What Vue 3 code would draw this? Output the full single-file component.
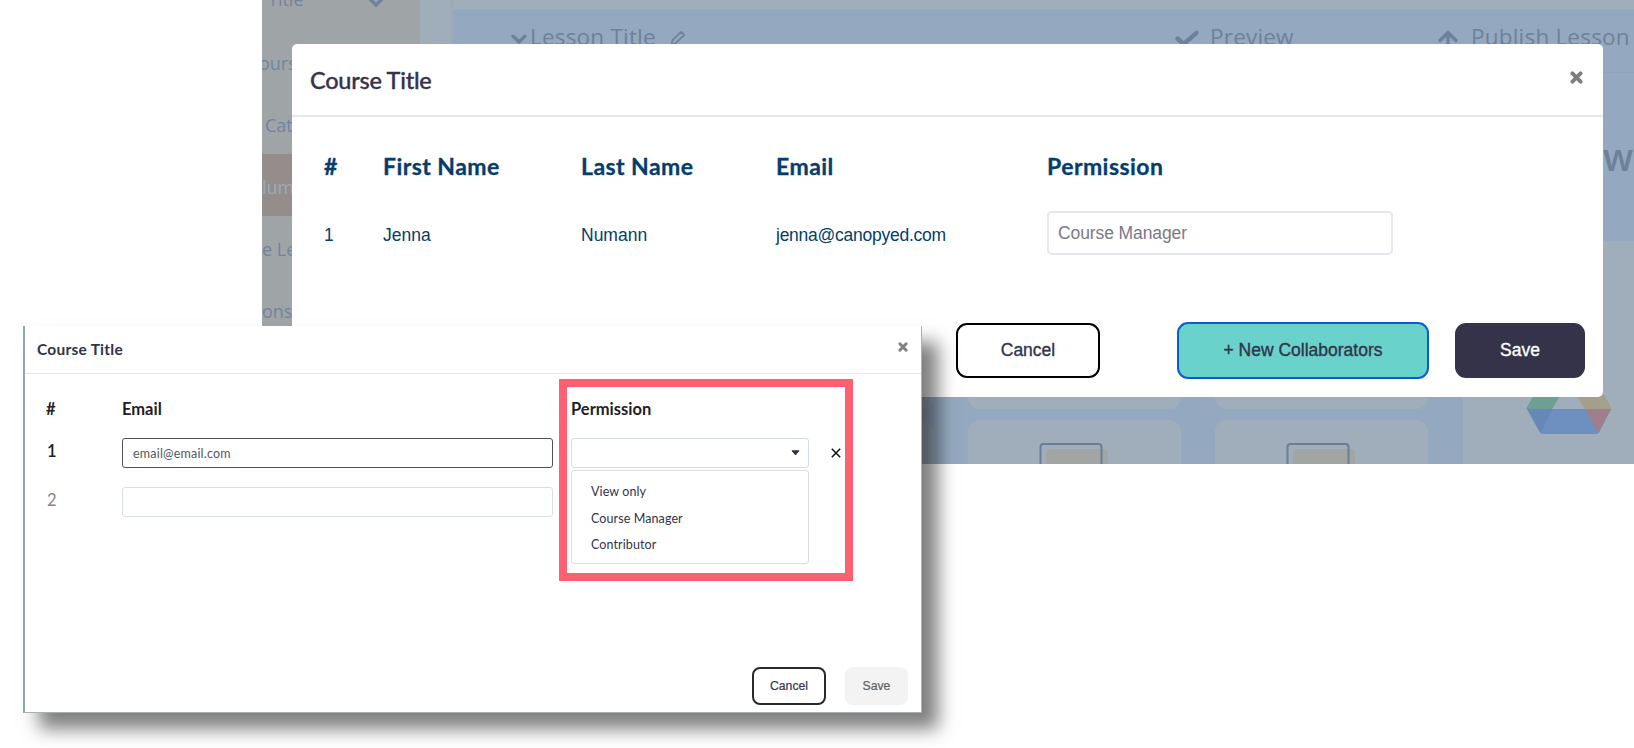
<script setup>
import { ref } from 'vue'

const menuItems = [
    { label: 'Title', caret: true },
    { label: 'ours' },
    { label: 'Cat' },
    { label: 'lum', active: true },
    { label: 'e Le' },
    { label: 'ons' }
]

const members = ref([
    { first: 'Jenna', last: 'Numann', email: 'jenna@canopyed.com', permission: 'Course Manager' }
])

const invites = ref([{ email: 'email@email.com' }, { email: '' }])

const permissions = ['View only', 'Course Manager', 'Contributor']
</script>

<template>
    <div class="stage">
        <div class="app">
            <aside class="sidebar">
                <div v-for="(item, i) in menuItems" :key="item.label" class="side-item"
                    :class="['side-' + i, { active: item.active }]">
                    <span>{{ item.label }}</span>
                    <svg v-if="item.caret" class="side-caret" width="16" height="10" viewBox="0 0 16 10">
                        <path d="M2 2l6 6 6-6" fill="none" stroke="#6f83a0" stroke-width="3.5" />
                    </svg>
                </div>
            </aside>

            <section class="editor">
                <div class="lesson-bar">
                    <div class="lesson-name">
                        <svg width="16" height="11" viewBox="0 0 16 11">
                            <path d="M2.2 2.3L8 8l5.8-5.7" fill="none" stroke="#6e819a" stroke-width="3.6"
                                stroke-linecap="round" />
                        </svg>
                        <span class="bar-text title-text">Lesson Title</span>
                        <svg class="pencil" width="16" height="16" viewBox="0 0 16 16">
                            <path d="M1.5 14.5l1-4.3 8.8-8.4 3 3-8.8 8.5z" fill="none" stroke="#6e819a"
                                stroke-width="1.7" stroke-linejoin="round" />
                        </svg>
                    </div>
                    <div class="bar-action preview">
                        <svg width="24" height="17" viewBox="0 0 24 17">
                            <path d="M2.5 8.5l6.2 5.6L21.4 2.8" fill="none" stroke="#6e819a" stroke-width="4.4"
                                stroke-linecap="round" />
                        </svg>
                        <span class="bar-text">Preview</span>
                    </div>
                    <div class="bar-action publish">
                        <svg width="20" height="20" viewBox="0 0 20 20">
                            <path d="M2 10.5l8-8 8 8M10 3v17" fill="none" stroke="#6e819a" stroke-width="3.4"
                                stroke-linecap="round" stroke-linejoin="round" />
                        </svg>
                        <span class="bar-text">Publish Lesson</span>
                    </div>
                </div>
                <div class="lesson-hero">w</div>
                <div class="lesson-body">
                    <div class="cards">
                        <div v-for="n in 6" :key="n" class="card">
                            <svg v-if="n > 4" width="72" height="60" viewBox="0 0 72 60">
                                <rect x="7" y="6" width="62" height="60" rx="5" fill="#a1a5a4" />
                                <rect x="1.5" y="1" width="61" height="60" rx="3" fill="none" stroke="#6b7d98"
                                    stroke-width="2" />
                            </svg>
                        </div>
                    </div>
                    <div class="library">
                        <svg width="86" height="76" viewBox="0 0 88 76" preserveAspectRatio="none">
                            <path d="M29 0L0 51h27L57 0z" fill="#6f9f92" />
                            <path d="M29 0h30l29 51H60z" fill="#a39f8b" />
                            <path d="M44 25L27 51h33z" fill="#a0aebb" />
                            <path d="M1 51h86L75 74q-1 2-4 2H18q-3 0-4-2z" fill="#6e90c0" />
                            <path d="M1 51h26L15 75z" fill="#6688b5" />
                            <path d="M60 51h27L74 75z" fill="#9f7f8b" />
                        </svg>
                    </div>
                </div>
            </section>
        </div>

        <div class="dialog course-dialog">
            <header class="dialog-head">
                <h2>Course Title</h2>
                <svg class="close" width="13" height="13" viewBox="0 0 14 14">
                    <path d="M2.6 2.6l8.8 8.8M11.4 2.6l-8.8 8.8" stroke="#7f7f7f" stroke-width="4.2"
                        stroke-linecap="round" />
                </svg>
            </header>
            <div class="member-grid member-head">
                <span>#</span>
                <span>First Name</span>
                <span>Last Name</span>
                <span>Email</span>
                <span>Permission</span>
            </div>
            <div v-for="(m, i) in members" :key="m.email" class="member-grid member-row">
                <span>{{ i + 1 }}</span>
                <span>{{ m.first }}</span>
                <span>{{ m.last }}</span>
                <span class="member-email">{{ m.email }}</span>
                <div class="member-permission">{{ m.permission }}</div>
            </div>
            <footer class="course-foot">
                <button class="btn btn-cancel">Cancel</button>
                <button class="btn btn-new">+ New Collaborators</button>
                <button class="btn btn-save">Save</button>
            </footer>
        </div>

        <div class="dialog invite-dialog">
            <header class="dialog-head">
                <h2>Course Title</h2>
                <svg class="close" width="10" height="10" viewBox="0 0 14 14">
                    <path d="M2.6 2.6l8.8 8.8M11.4 2.6l-8.8 8.8" stroke="#808080" stroke-width="4"
                        stroke-linecap="round" />
                </svg>
            </header>
            <div class="invite-grid invite-head">
                <span>#</span>
                <span>Email</span>
                <span class="permission-head">Permission</span>
            </div>
            <div v-for="(invite, i) in invites" :key="i" class="invite-grid invite-row">
                <span class="num" :class="{ muted: i > 0 }">{{ i + 1 }}</span>
                <div class="field" :class="{ focused: i === 0 }">{{ invite.email }}</div>
                <div class="field select" :class="{ behind: i > 0 }">
                    <svg v-if="i === 0" width="9" height="6" viewBox="0 0 9 6">
                        <path d="M1 .8h7L4.5 4.9z" fill="#34334a" stroke="#34334a" stroke-linejoin="round" />
                    </svg>
                    <ul v-if="i === 0" class="menu">
                        <li v-for="p in permissions" :key="p">{{ p }}</li>
                    </ul>
                </div>
                <svg v-if="i === 0" class="remove" width="10" height="10" viewBox="0 0 10 10">
                    <path d="M.8.8l8.4 8.4M9.2.8L.8 9.2" stroke="#111" stroke-width="1.5" />
                </svg>
            </div>
            <footer class="invite-foot">
                <button class="btn btn-cancel">Cancel</button>
                <button class="btn btn-save">Save</button>
            </footer>
            <div class="highlight"></div>
        </div>
    </div>
</template>

<style>
body {
    margin: 0;
    background: #fff;
}
</style>

<style scoped>
* {
    box-sizing: border-box;
}

.stage {
    position: relative;
    width: 1634px;
    height: 748px;
    overflow: hidden;
    background: #fff;
    font-family: "Liberation Sans", Arial, sans-serif;
}

svg {
    display: block;
    flex-shrink: 0;
}

/* dimmed course editor */
.app {
    position: absolute;
    top: 0;
    left: 262px;
    display: flex;
    width: 1372px;
    height: 464px;
    overflow: hidden;
    background: #a0aebb;
}

.sidebar {
    width: 158px;
    flex-shrink: 0;
    background: #9fa5a6;
    font-family: "Open Sans", sans-serif;
    font-size: 18px;
    color: #71849f;
    overflow: hidden;
}

.side-item {
    display: flex;
    height: 62px;
    padding: 20px 0 0 3px;
    line-height: 27px;
    white-space: nowrap;
}

.side-item.side-0 {
    height: 30px;
    padding: 0 0 0 6px;
}

.side-0 span {
    width: 39px;
    margin-top: -14px;
}

.side-caret {
    margin: -3px 0 0 61px;
}

.side-1 span {
    margin-left: -6px;
}

.side-3 span,
.side-4 span,
.side-5 span {
    margin-left: -3px;
}

.side-item.active {
    background: #948d8c;
    color: #9aabbc;
}

.editor {
    display: flex;
    flex-direction: column;
    width: 1181px;
    margin-left: 33px;
    padding-top: 9px;
    box-shadow: -1px 0 2px rgba(120, 140, 160, 0.12);
}

.lesson-bar {
    display: flex;
    height: 64px;
    flex-shrink: 0;
    padding-top: 12px;
    background: #94a9bf;
    border-top: 1px solid #9aa9b8;
    border-bottom: 1px solid #8fa4bb;
}

.bar-text {
    font-family: "Open Sans", sans-serif;
    font-size: 22.5px;
    line-height: 30px;
    letter-spacing: 0.2px;
    color: #6e819a;
    white-space: nowrap;
}

.lesson-name {
    display: flex;
    width: 664px;
    padding-left: 58px;
}

.lesson-name svg:first-child {
    margin: 12px 3px 0 0;
}

.title-text {
    width: 126px;
}

.pencil {
    margin: 8px 0 0 14px;
}

.bar-action {
    display: flex;
}

.preview {
    width: 262px;
    padding-left: 58px;
}

.preview svg {
    margin: 8px 11px 0 0;
}

.publish {
    padding-left: 59px;
}

.publish svg {
    margin: 8px 13px 0 0;
}

.lesson-hero {
    height: 168px;
    flex-shrink: 0;
    padding: 54px 0 0 1150px;
    background: #94a9bf;
    font-family: "Open Sans", sans-serif;
    font-size: 37px;
    font-weight: 600;
    line-height: 60px;
    color: #6e819a;
}

.lesson-body {
    display: flex;
    flex: 1;
    min-height: 0;
}

.cards {
    display: grid;
    width: 1010px;
    grid-template-columns: repeat(3, 213px);
    grid-template-rows: 168px 60px;
    justify-content: end;
    gap: 11px 34px;
    padding-right: 35px;
    background: #94a9bf;
    overflow: hidden;
}

.card {
    display: flex;
    padding: 23px 0 0 71px;
    border-radius: 12px;
    background: #a0aebb;
    overflow: hidden;
}

.library {
    flex: 1;
    padding: 117px 0 0 63px;
}

/* shared dialog parts */
.dialog {
    position: absolute;
    display: flex;
    flex-direction: column;
    background: #fff;
}

.dialog-head {
    display: flex;
    align-items: flex-start;
    justify-content: space-between;
    flex-shrink: 0;
}

h2 {
    margin: 0;
    font-family: Lato, sans-serif;
    color: #34334a;
}

.btn {
    padding: 0;
    border: 0;
    font-family: "Liberation Sans", Arial, sans-serif;
    color: #34334a;
    white-space: nowrap;
    -webkit-text-stroke: 0.35px currentColor;
}

/* collaborators list */
.course-dialog {
    top: 44px;
    left: 292px;
    width: 1311px;
    height: 353px;
    border-radius: 5px;
}

.course-dialog .dialog-head {
    height: 73px;
    padding: 21px 20px 0 18px;
    border-bottom: 2px solid #e4e9ed;
}

.course-dialog h2 {
    font-size: 23.5px;
    font-weight: 500;
    line-height: 30px;
    letter-spacing: -0.25px;
    -webkit-text-stroke: 0.35px currentColor;
}

.course-dialog .close {
    margin-top: 6px;
}

.member-grid {
    display: grid;
    grid-template-columns: 59px 198px 195px 271px 346px;
    padding-left: 32px;
    color: #053d6b;
}

.member-head {
    margin-top: 33px;
    font-family: Lato, sans-serif;
    font-size: 23px;
    font-weight: 700;
    line-height: 32px;
    letter-spacing: 0.45px;
    -webkit-text-stroke: 0.3px currentColor;
}

.member-row {
    margin-top: 29px;
    font-size: 17.5px;
    line-height: 48px;
}

.member-email {
    letter-spacing: -0.25px;
}

.member-permission {
    height: 44px;
    padding-left: 9px;
    border: 2px solid #e2e8ec;
    border-radius: 5px;
    line-height: 40px;
    letter-spacing: -0.1px;
    color: #7d7889;
}

.course-foot {
    display: flex;
    align-items: center;
    justify-content: flex-end;
    height: 57px;
    margin: 63px 18px 0 0;
}

.course-foot .btn {
    height: 55px;
    border-radius: 11px;
    font-size: 17.5px;
}

.course-foot .btn-cancel {
    width: 144px;
    margin-right: 77px;
    border: 2px solid #000;
    background: #fff;
}

.course-foot .btn-new {
    width: 252px;
    height: 57px;
    margin-right: 26px;
    border: 2px solid #0b5cd0;
    background: #68d2cb;
}

.course-foot .btn-save {
    width: 130px;
    background: #34334a;
    color: #fff;
}

/* invite form */
.invite-dialog {
    top: 326px;
    left: 23px;
    width: 899px;
    height: 387px;
    border-right: 1px solid #a3b2c0;
    border-bottom: 1px solid #a7afb5;
    border-left: 2px solid #92a5b7;
    box-shadow: 16px 16px 17px rgba(0, 0, 0, 0.5);
}

.invite-dialog .dialog-head {
    height: 48px;
    padding: 12px 13px 0 12px;
    border-bottom: 1px solid #e2e7eb;
}

.invite-dialog h2 {
    font-size: 15.5px;
    font-weight: 700;
    line-height: 22px;
    letter-spacing: 0.25px;
}

.invite-dialog .close {
    margin-top: 4px;
}

.invite-grid {
    display: grid;
    grid-template-columns: 76px 431px 256px 10px;
    padding-left: 21px;
}

.invite-head {
    margin-top: 25px;
    font-family: Lato, sans-serif;
    font-size: 16.5px;
    font-weight: 700;
    line-height: 21px;
    color: #1f2126;
}

.permission-head {
    padding-left: 18px;
}

.invite-row {
    margin-top: 19px;
    font-family: Lato, sans-serif;
}

.invite-head + .invite-row {
    margin-top: 18px;
}

.invite-row .remove {
    margin: 10px 0 0 22px;
}

.num {
    padding: 1px 0 0 1px;
    font-size: 16.5px;
    font-weight: 600;
    line-height: 24px;
    color: #1f2126;
}

.num.muted {
    font-weight: 400;
    color: #858585;
}

.field {
    height: 30px;
    padding: 0 10px;
    border: 1px solid #d8dfe7;
    border-radius: 3px;
    font-size: 12.5px;
    line-height: 30px;
    letter-spacing: 0.2px;
    color: #53585d;
}

.field.focused {
    border-color: #505256;
}

.select {
    position: relative;
    display: flex;
    align-items: center;
    justify-content: flex-end;
    width: 238px;
    margin-left: 18px;
    padding-right: 8px;
    border-color: #d2dde8;
}

.select.behind {
    border-color: #fff #b4bdc7;
}

.menu {
    position: absolute;
    z-index: 1;
    top: 31px;
    left: -1px;
    width: 238px;
    height: 94px;
    margin: 0;
    padding: 8px 0 0 19px;
    border: 1px solid #dadcde;
    border-radius: 3px;
    background: #fff;
    list-style: none;
    line-height: 26.7px;
    letter-spacing: 0.1px;
    color: #34334a;
}

.invite-foot {
    display: flex;
    justify-content: flex-end;
    gap: 19px;
    margin: auto 13px 7px 0;
}

.invite-foot .btn {
    height: 38px;
    border-radius: 8px;
    font-size: 12.2px;
    -webkit-text-stroke-width: 0.2px;
}

.invite-foot .btn-cancel {
    width: 74px;
    border: 2px solid #2a2a2e;
    background: #fff;
}

.invite-foot .btn-save {
    width: 63px;
    background: #f3f3f3;
    color: #606060;
}

/* callout frame around the permission picker */
.highlight {
    position: absolute;
    z-index: 2;
    top: 53px;
    left: 534px;
    width: 294px;
    height: 202px;
    border: 8px solid #ff6072;
}
</style>
